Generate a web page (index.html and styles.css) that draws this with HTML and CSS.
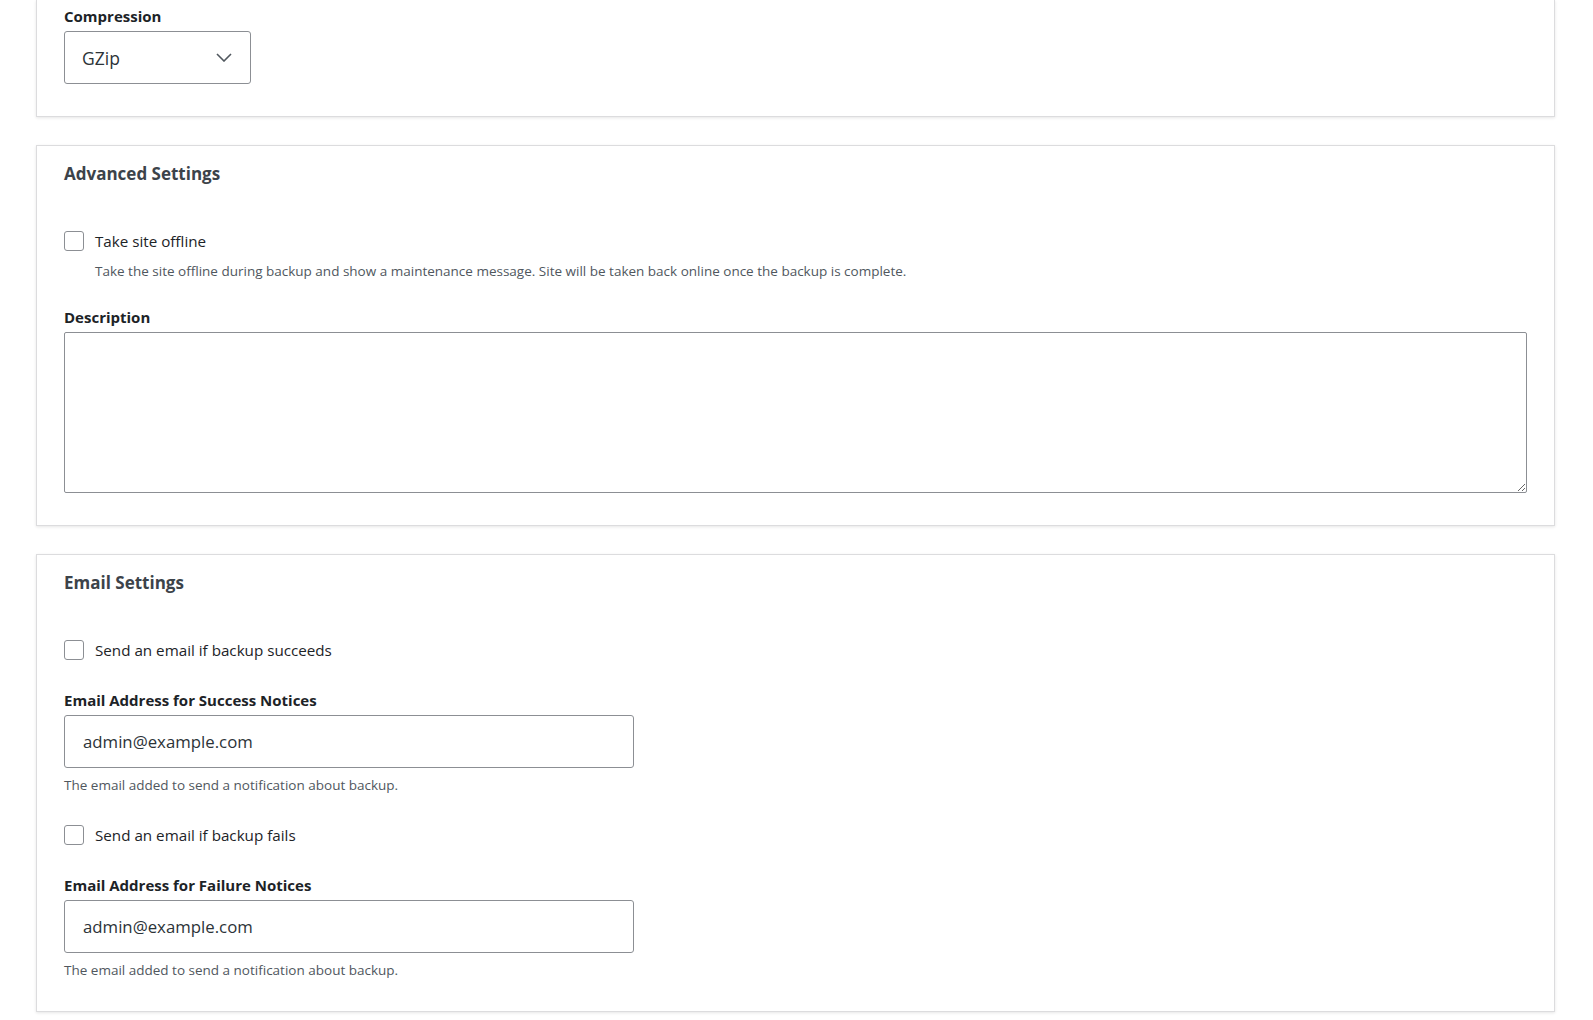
FILE: index.html
```html
<!DOCTYPE html>
<html lang="en">
<head>
<meta charset="utf-8">
<title>Backup settings</title>
<link rel="stylesheet" href="styles.css">
</head>
<body>
<main class="page">
  <section class="card card--cut">
    <label class="field-label" for="compression">Compression</label>
    <div class="select">
      <span class="select__value">GZip</span>
      <svg class="select__chevron" width="16" height="9" viewBox="0 0 16 9" aria-hidden="true"><polyline points="1,1 8,8 15,1" fill="none" stroke="#50575e" stroke-width="1.6"/></svg>
    </div>
  </section>

  <section class="card">
    <h2 class="card__title">Advanced Settings</h2>
    <label class="check check--first"><input type="checkbox" class="check__box"><span>Take site offline</span></label>
    <p class="help help--indent">Take the site offline during backup and show a maintenance message. Site will be taken back online once the backup is complete.</p>
    <label class="field-label field-label--desc" for="desc">Description</label>
    <textarea id="desc" class="textarea"></textarea>
  </section>

  <section class="card card--last">
    <h2 class="card__title">Email Settings</h2>
    <label class="check check--first"><input type="checkbox" class="check__box"><span>Send an email if backup succeeds</span></label>
    <label class="field-label field-label--email" for="ok">Email Address for Success Notices</label>
    <input id="ok" class="input" type="text" value="admin@example.com">
    <p class="help">The email added to send a notification about backup.</p>
    <label class="check check--next"><input type="checkbox" class="check__box"><span>Send an email if backup fails</span></label>
    <label class="field-label field-label--email" for="fail">Email Address for Failure Notices</label>
    <input id="fail" class="input" type="text" value="admin@example.com">
    <p class="help">The email added to send a notification about backup.</p>
  </section>
</main>
</body>
</html>
```

FILE: styles.css
```css
* { box-sizing: border-box; }
html, body { margin: 0; padding: 0; background: #ffffff; }
body {
  font-family: "Open Sans", "Noto Sans", "Liberation Sans", sans-serif;
  color: #1d2327;
  font-size: 16px;
}
.page {
  margin: 0 38px 0 36px;
  display: flex;
  flex-direction: column;
  gap: 28px;
  padding-bottom: 20px;
}
.card {
  background: #fff;
  border: 1px solid #dcdcde;
  box-shadow: 0 1px 3px rgba(0,0,0,0.10);
  padding: 15px 27px 32px;
  display: flex;
  flex-direction: column;
  align-items: flex-start;
}
.card--cut {
  border-top: none;
  padding-top: 6px;
  padding-bottom: 32px;
}
.card--last { padding-bottom: 31px; }
.card__title {
  margin: 0;
  font-size: 17px;
  line-height: 25px;
  font-weight: 700;
  color: #3c434a;
}
.field-label {
  display: block;
  font-size: 15px;
  line-height: 20px;
  font-weight: 700;
  color: #1d2327;
  margin-bottom: 5px;
}
.select {
  width: 187px;
  height: 53px;
  border: 1px solid #8c8f94;
  border-radius: 3px;
  display: flex;
  align-items: center;
  justify-content: space-between;
  padding: 0 18px 0 17px;
}
.select__value { font-size: 17.5px; color: #2c3338; }
.select__chevron { display: block; }
.check {
  display: flex;
  align-items: center;
  gap: 11px;
  font-size: 15.2px;
  line-height: 24px;
  color: #1d2327;
}
.check--first { margin-top: 43px; }
.check--next { margin-top: 28px; }
.check__box {
  appearance: none;
  -webkit-appearance: none;
  margin: 0;
  width: 20px;
  height: 20px;
  border: 1px solid #8c8f94;
  border-radius: 3px;
  background: #fff;
  flex: none;
}
.help {
  margin: 7px 0 0;
  font-size: 13.5px;
  line-height: 20px;
  color: #50575e;
}
.help--indent { margin-left: 31px; margin-top: 8px; }
.field-label--desc { margin-top: 26px; margin-bottom: 5px; }
.field-label--email { margin-top: 28px; margin-bottom: 5px; }
.textarea {
  display: block;
  width: 100%;
  height: 161px;
  border: 1px solid #8c8f94;
  border-radius: 2px;
  font-family: inherit;
  font-size: 16px;
  padding: 8px 12px;
  resize: vertical;
  margin: 0;
}
.input {
  display: block;
  width: 570px;
  height: 53px;
  border: 1px solid #8c8f94;
  border-radius: 3px;
  padding: 0 18px;
  font-family: inherit;
  font-size: 16.8px;
  color: #2c3338;
  margin: 0;
}
```
